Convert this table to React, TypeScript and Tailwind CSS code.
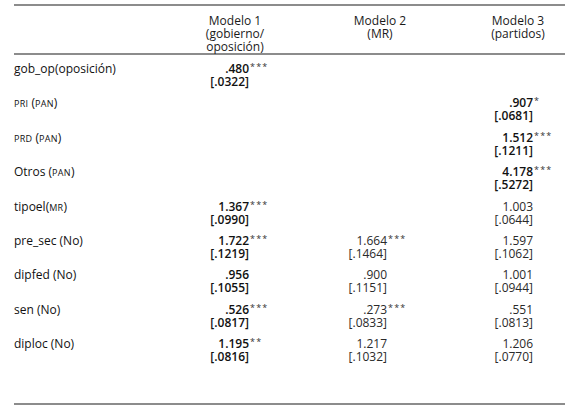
const rows: { label: React.ReactNode; cells: ([string, string, string, boolean] | null)[] }[] = [
  { label: <>gob_op(oposición)</>, cells: [[".480", "***", "[.0322]", true], null, null] },
  { label: <><Sc>pri</Sc> (<Sc>pan</Sc>)</>, cells: [null, null, [".907", "*", "[.0681]", true]] },
  { label: <><Sc>prd</Sc> (<Sc>pan</Sc>)</>, cells: [null, null, ["1.512", "***", "[.1211]", true]] },
  { label: <>Otros (<Sc>pan</Sc>)</>, cells: [null, null, ["4.178", "***", "[.5272]", true]] },
  { label: <>tipoel(<Sc>mr</Sc>)</>, cells: [["1.367", "***", "[.0990]", true], null, ["1.003", "", "[.0644]", false]] },
  { label: <>pre_sec (No)</>, cells: [["1.722", "***", "[.1219]", true], ["1.664", "***", "[.1464]", false], ["1.597", "", "[.1062]", false]] },
  { label: <>dipfed (No)</>, cells: [[".956", "", "[.1055]", true], [".900", "", "[.1151]", false], ["1.001", "", "[.0944]", false]] },
  { label: <>sen (No)</>, cells: [[".526", "***", "[.0817]", true], [".273", "***", "[.0833]", false], [".551", "", "[.0813]", false]] },
  { label: <>diploc (No)</>, cells: [["1.195", "**", "[.0816]", true], ["1.217", "", "[.1032]", false], ["1.206", "", "[.0770]", false]] },
];

function Sc({ children }: { children: React.ReactNode }) {
  return <span className="text-[9px] uppercase tracking-[0.3px]">{children}</span>;
}

function Value({ v }: { v: [string, string, string, boolean] | null }) {
  if (!v) return <div />;
  const [num, stars, se, bold] = v;
  return (
    <div className={`grid grid-cols-[48px_auto] ${bold ? "font-semibold text-[#111]" : "text-[#2a2a2a]"}`}>
      <div className="text-right">{num}</div>
      <div className="text-[9px] leading-[9px] tracking-[1.2px] pl-[1px] font-normal text-[#333]">{stars}</div>
      <div className="text-right">{se}</div>
      <div />
    </div>
  );
}

export default function App() {
  return (
    <div
      className="w-[575px] h-[406px] bg-white text-[12px] leading-[13px] text-[#111] overflow-hidden"
      style={{ fontFamily: '"Open Sans", "DejaVu Sans", sans-serif' }}
    >
      <div className="ml-[14px] mr-[10px] pt-[4px]">
        <div className="h-[2px] bg-[#8c8c8c]" />
        <div className="grid grid-cols-[171px_100px_190px_86px] pt-[8px] text-center text-[#1a1a1a]">
          <div />
          <div>Modelo 1<br />(gobierno/<br />oposición)</div>
          <div>Modelo 2<br />(MR)</div>
          <div>Modelo 3<br />(partidos)</div>
        </div>
        <div className="h-[2px] bg-[#8c8c8c]" />
        {rows.map((r, i) => (
          <div key={i} className="grid grid-cols-[187px_138px_146px_1fr] pt-[7px] pb-[1.4px]">
            <div>{r.label}</div>
            {r.cells.map((c, j) => (
              <Value key={j} v={c} />
            ))}
          </div>
        ))}
        <div className="h-[38px]" />
        <div className="h-[2px] bg-[#8c8c8c]" />
      </div>
    </div>
  );
}
